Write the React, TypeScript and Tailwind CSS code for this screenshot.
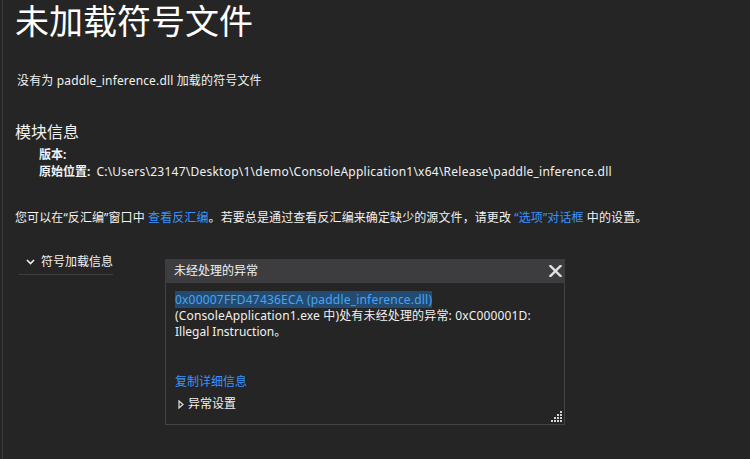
import React from "react";

const font = "font-['Noto_Sans','Noto_Sans_CJK_SC',sans-serif]";

function CloseIcon() {
  return (
    <svg width="13" height="12" viewBox="0 0 13 12" className="block">
      <path d="M1.5 1 L11.5 11 M11.5 1 L1.5 11" stroke="#e2e2e2" strokeWidth="2.4" strokeLinecap="square" />
    </svg>
  );
}

function ResizeGrip() {
  // small dotted triangle in the corner of the popup
  const dots: [number, number][] = [];
  for (let row = 0; row < 4; row++) {
    for (let col = 3 - row; col < 4; col++) dots.push([col * 3, row * 3]);
  }
  return (
    <svg width="11" height="11" viewBox="0 0 11 11" className="block">
      {dots.map(([x, y], i) => (
        <rect key={i} x={x} y={y} width="2" height="2" fill="#d4d4d8" />
      ))}
    </svg>
  );
}

function ExceptionPopup() {
  return (
    <div className="absolute left-[165px] top-[259px] w-[400px] h-[166px] border border-[#434346] bg-[#252526] flex flex-col">
      <div className="h-[24px] bg-[#3d3d40] flex items-center justify-between pl-[9px] pr-[3px] -mx-px -mt-px">
        <span className="text-[12px] leading-[16px] text-[#f1f1f1]">未经处理的异常</span>
        <CloseIcon />
      </div>
      <div className="flex-1 flex flex-col pl-[9px] pt-[9px] text-[12px] leading-[16px] text-[#f1f1f1] relative">
        <div>
          <span className="bg-[#234b72] text-[#4aa3f0] tracking-[0.2px]">0x00007FFD47436ECA (paddle_inference.dll)</span>
        </div>
        <div className="tracking-[0.15px]">(ConsoleApplication1.exe 中)处有未经处理的异常: 0xC000001D:</div>
        <div>Illegal Instruction。</div>
        <div className="mt-[34px] text-[#3794ff]">复制详细信息</div>
        <div className="mt-[6px] flex items-center gap-[4px] pl-[3px]">
          <svg width="6" height="9" viewBox="0 0 6 9" className="block">
            <path d="M1 1 L5 4.5 L1 8 Z" fill="none" stroke="#e0e0e0" strokeWidth="1.2" />
          </svg>
          <span>异常设置</span>
        </div>
        <div className="absolute right-[2px] bottom-[2px]">
          <ResizeGrip />
        </div>
      </div>
    </div>
  );
}

export default function App() {
  return (
    <div className={`w-[750px] h-[459px] bg-[#252526] overflow-hidden relative text-[#f1f1f1] ${font}`}>
      <div className="ml-[2px] h-full border-l border-[#3a3a3d] pl-[12px] flex flex-col">
        <h1 className="text-[34px] leading-[42px] text-white">未加载符号文件</h1>

        <p className="mt-[31px] pl-[2px] text-[12px] leading-[16px] tracking-[0.15px]">没有为 paddle_inference.dll 加载的符号文件</p>

        <h2 className="mt-[33px] text-[16px] leading-[20px]">模块信息</h2>
        <div className="mt-[4px] pl-[24px] text-[12px] leading-[17px]">
          <div className="font-bold">版本:</div>
          <div className="flex gap-[6px]">
            <span className="font-bold">原始位置:</span>
            <span className="tracking-[0.24px]">C:\Users\23147\Desktop\1\demo\ConsoleApplication1\x64\Release\paddle_inference.dll</span>
          </div>
        </div>

        <p className="mt-[30px] text-[12px] leading-[16px] tracking-[0.1px]">
          您可以在“反汇编”窗口中 <span className="text-[#3794ff]">查看反汇编</span>。若要总是通过查看反汇编来确定缺少的源文件，请更改{" "}
          <span className="text-[#3794ff]">“选项”对话框</span> 中的设置。
        </p>

        <div className="mt-[28px] ml-[4px] w-[94px] border-b border-[#3f3f46] pb-[4px] flex items-center gap-[6px] text-[12px] leading-[16px]">
          <svg width="9" height="6" viewBox="0 0 9 6" className="block ml-[7px]">
            <path d="M1 1 L4.5 4.5 L8 1" fill="none" stroke="#f1f1f1" strokeWidth="1.6" />
          </svg>
          <span>符号加载信息</span>
        </div>
      </div>

      <ExceptionPopup />
    </div>
  );
}
